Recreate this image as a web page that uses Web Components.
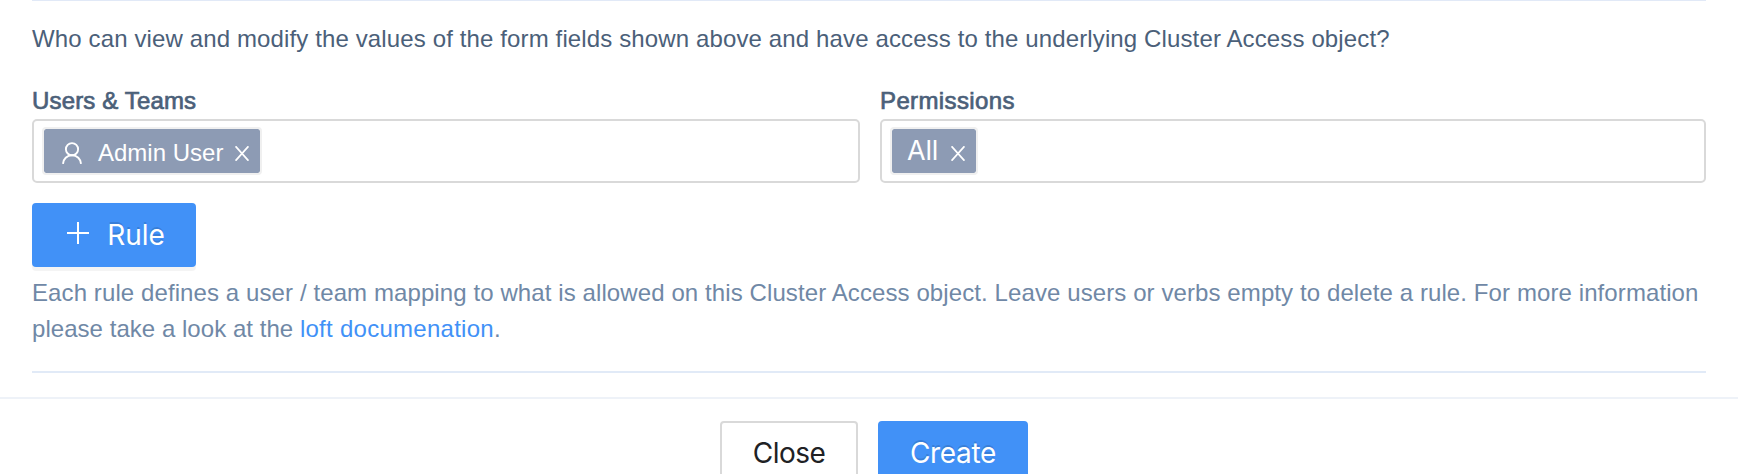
<!DOCTYPE html>
<html lang="en">
<head>
<meta charset="utf-8">
<title>Cluster Access</title>
<style>
body { margin: 0; background: #fff; font: 24px/36px "Liberation Sans", Arial, sans-serif; overflow: hidden; }
</style>
</head>
<body>
<access-form></access-form>
<script>
const define = (name, html) => {
  const template = document.createElement('template');
  template.innerHTML = html;
  customElements.define(name, class extends HTMLElement {
    constructor() {
      super();
      this.attachShadow({ mode: 'open' }).append(template.content.cloneNode(true));
    }
  });
};

define('user-icon', `
<style>:host{display:block;width:20px;height:22px}svg{display:block}</style>
<svg width="20" height="22" viewBox="0 0 20 22" fill="none" stroke="#fff" stroke-width="1.9">
  <circle cx="10" cy="7.2" r="6.1"/><path d="M1 21.9C1.2 17 5 13.3 10 13.3S18.8 17 19 21.9"/>
</svg>`);

define('close-icon', `
<style>:host{display:block;width:14px;height:15px}svg{display:block}</style>
<svg width="14" height="15" viewBox="0 0 14 15" fill="none" stroke="#fff" stroke-width="1.7">
  <path d="M.6.3 13.4 14.7M13.4.3.6 14.7"/>
</svg>`);

define('plus-icon', `
<style>:host{display:block;width:22px;height:22px}svg{display:block}</style>
<svg width="22" height="22" viewBox="0 0 22 22" fill="none" stroke="#fff" stroke-width="2"><path d="M11 0v22M0 11h22"/></svg>`);

define('select-tag', `
<style>
:host{display:flex;align-items:center;box-sizing:border-box;height:48px;border:2px solid #f0f0f0;border-radius:4px;background:#8d9bb4;background-clip:padding-box;color:#fff;padding:0 11px 0 18px;white-space:nowrap}
:host([plain]){padding-left:15px}
:host([plain]) ::slotted(span){font:27px/44px Inter,sans-serif;letter-spacing:-.2px}
close-icon{margin:4px 0 0 auto}
</style>
<slot></slot><close-icon></close-icon>`);

define('select-field', `
<style>
:host{display:block}
.label{height:36px;color:#4b6079;-webkit-text-stroke:.7px #4b6079}
.box{box-sizing:border-box;height:64px;border:2px solid #d9d9d9;border-radius:5px;padding:6px 8px;display:flex}
</style>
<div class="label"><slot name="label"></slot></div>
<div class="box"><slot></slot></div>`);

define('ui-button', `
<style>
:host{display:flex;align-items:center;justify-content:center;box-sizing:border-box;height:64px;border:2px solid #d9d9d9;border-radius:4px;background:#fff;color:#202124;font:28px/60px Inter,sans-serif;box-shadow:0 4px 0 rgba(0,0,0,.016)}
:host([primary]){background:#4191f7;border-color:#4191f7;color:#fff;text-shadow:0 -2px 0 rgba(0,0,0,.12);box-shadow:0 4px 0 rgba(0,0,0,.045)}
</style>
<slot></slot>`);

define('help-text', `
<style>
:host{display:block;color:#7088a6;letter-spacing:.097px;white-space:nowrap}
::slotted(span){letter-spacing:.04px}
::slotted(a){color:#4191f7;letter-spacing:.27px;text-decoration:none}
</style>
<slot></slot>`);

define('access-form', `
<style>
:host{display:block}
main{margin:0 32px;border-top:1px solid #e1e9f7;border-bottom:2px solid #e1eaf7;box-sizing:border-box;height:373px;padding-top:20px}
.question{color:#4b6079;letter-spacing:.128px;white-space:nowrap;height:36px}
.fields{display:grid;grid-template-columns:828px 826px;gap:20px;margin-top:26px}
.users{width:220px}
.users user-icon{margin-top:4px}
.users .name{margin:3px 0 0 16px}
.all{width:88px}
.rule{width:164px;margin:20px 0 8px}
.rule plus-icon{margin:-4px 18px 0 4px}
footer{display:flex;justify-content:center;gap:20px;margin-top:24px;border-top:2px solid #eef2f8;padding:22px 0 0 10px}
.close{width:138px;letter-spacing:-.5px}
.create{width:150px;letter-spacing:-.35px}
</style>
<main>
  <div class="question">Who can view and modify the values of the form fields shown above and have access to the underlying Cluster Access object?</div>
  <div class="fields">
    <select-field>
      <span slot="label" style="letter-spacing:.15px">Users &amp; Teams</span>
      <select-tag class="users"><user-icon></user-icon><span class="name">Admin User</span></select-tag>
    </select-field>
    <select-field>
      <span slot="label" style="letter-spacing:.38px">Permissions</span>
      <select-tag class="all" plain><span>All</span></select-tag>
    </select-field>
  </div>
  <ui-button class="rule" primary><plus-icon></plus-icon><span>Rule</span></ui-button>
  <help-text>Each rule defines a user / team mapping to what is allowed on this Cluster Access object. Leave users or verbs empty to delete a rule. For more information<br><span>please take a look at the </span><a>loft documenation</a>.</help-text>
</main>
<footer>
  <ui-button class="close">Close</ui-button>
  <ui-button class="create" primary>Create</ui-button>
</footer>`);
</script>
</body>
</html>
